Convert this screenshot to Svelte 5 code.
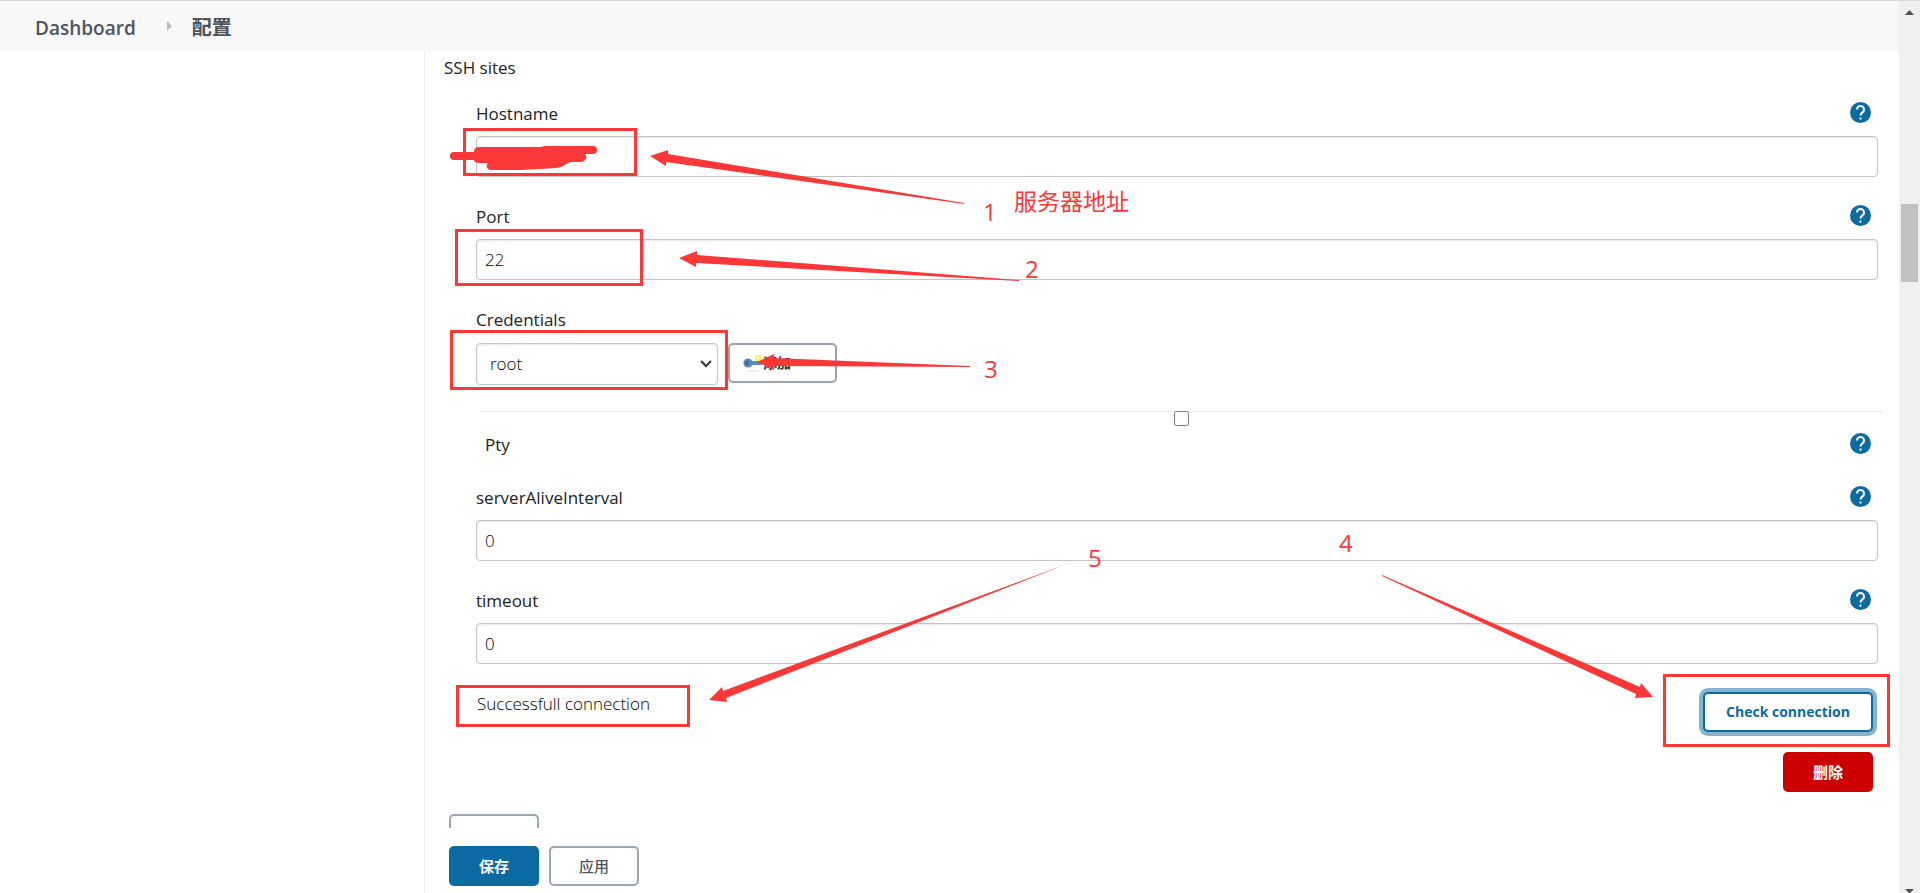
<script>
    let hostname = '';
    let port = '22';
    let credential = 'root';
    let pty = false;
    let interval = '0';
    let timeout = '0';

    const boxes = [
        { x: 463, y: 128, w: 174, h: 48 },
        { x: 455, y: 229, w: 188, h: 57 },
        { x: 450, y: 330, w: 278, h: 60 },
        { x: 456, y: 685, w: 234, h: 42 },
        { x: 1663, y: 674, w: 227, h: 73 }
    ];

    const arrows = [
        '650,156 668,150 668,154 964,203 964,204 666,162 666,166',
        '679,258 697,251 697,255 1019,280 1019,281 696,263 696,267',
        '757,362 774,354 774,358 970,366 970,367 774,366 774,370',
        '709,700 722,687 723,691 1067,564 726,698 727,702',
        '1653,697 1641,683 1640,687 1382,575 1382,576 1636,694 1635,698'
    ];

    const notes = [
        { x: 983, y: 221, text: '1' },
        { x: 1025, y: 278, text: '2' },
        { x: 984, y: 378, text: '3' },
        { x: 1339, y: 552, text: '4' },
        { x: 1088, y: 567, text: '5' }
    ];
</script>

<style>
    :global(body) {
        background: #fff;
    }

    .page {
        position: relative;
        box-sizing: border-box;
        display: flex;
        height: 100vh;
        overflow: hidden;
        border-top: 1px solid #dadadf;
        color: #222;
        font-family: "Open Sans", "Noto Sans", "Noto Sans CJK SC", sans-serif;
        font-size: 17px;
        line-height: 24px;
    }

    .window {
        flex: 1;
        min-width: 0;
        display: flex;
        flex-direction: column;
    }

    .breadcrumbs {
        box-sizing: border-box;
        display: flex;
        align-items: center;
        flex: none;
        height: 50px;
        padding: 3px 0 0 35px;
        background: #f8f8f8;
        font-size: 19px;
        font-weight: 600;
    }

    .breadcrumbs a {
        color: #4d545d;
        text-decoration: none;
    }

    .breadcrumbs a:last-child {
        font-size: 20px;
    }

    .breadcrumbs svg {
        width: 6px;
        height: 10px;
        margin: 0 19px 4px 31px;
    }

    .body {
        flex: 1;
        min-height: 0;
        display: flex;
    }

    .side {
        flex: none;
        width: 424px;
        border-right: 1px solid #eaeff2;
    }

    main {
        flex: 1;
        min-width: 0;
        display: flex;
        flex-direction: column;
    }

    form {
        flex: 1;
        min-height: 0;
        overflow: hidden;
        padding: 5px 21px 0 19px;
    }

    h2 {
        margin: 0 0 22px;
        font-size: 17px;
        font-weight: 400;
    }

    .site {
        padding-left: 32px;
    }

    .field {
        margin-bottom: 28px;
    }

    .field.credentials {
        margin-bottom: 26px;
    }

    .head {
        display: flex;
        align-items: flex-start;
        justify-content: space-between;
        height: 24px;
        margin-bottom: 10px;
        padding-right: 7px;
        font-weight: 500;
    }

    .help {
        width: 21px;
        height: 21px;
        padding: 0;
        border: 0;
        border-radius: 50%;
        background: none;
    }

    .help svg {
        display: block;
    }

    input[type="text"], select {
        display: block;
        box-sizing: border-box;
        width: 100%;
        height: 41px;
        padding: 0 8px;
        border: 1px solid #c3c3c3;
        border-radius: 4px;
        background: #fff;
        box-shadow: inset 0 1px 2px rgba(0, 0, 0, .1);
        color: #000;
        font: inherit;
        font-weight: 300;
    }

    .row {
        display: flex;
        align-items: flex-start;
        gap: 10px;
        padding-top: 1px;
    }

    .pick {
        display: grid;
        width: 242px;
        align-items: center;
    }

    .pick > * {
        grid-area: 1 / 1;
    }

    .pick select {
        height: 42px;
        padding: 0 13px;
        appearance: none;
    }

    .pick svg {
        justify-self: end;
        margin-right: 6px;
        pointer-events: none;
    }

    button.btn {
        box-sizing: border-box;
        min-width: 90px;
        height: 40px;
        padding: 0 20px;
        border: 2px solid #9aa5af;
        border-radius: 5px;
        background: #fff;
        color: #4d545d;
        font: inherit;
        font-size: 15px;
        font-weight: 700;
    }

    button.add {
        display: flex;
        align-items: center;
        width: 109px;
        padding: 0 13px;
        color: #333;
        font-size: 14px;
    }

    button.check {
        width: 170px;
        padding: 0;
        border-color: #0b6aa2;
        color: #0b6aa2;
        box-shadow: 0 0 0 4px rgba(11, 106, 162, .5);
        font-size: 14px;
    }

    button.delete {
        border-color: #cc0003;
        background: #cc0003;
        color: #fff;
    }

    button.save {
        border-color: #0b6aa2;
        background: #0b6aa2;
        color: #fff;
    }

    button.apply {
        font-weight: 500;
    }

    .pty {
        display: flex;
        flex-direction: column;
        height: 74px;
        margin: 0 -5px 0 5px;
        border-top: 1px solid #eaeaea;
    }

    .pty input {
        align-self: center;
        width: 15px;
        height: 15px;
        margin: -1px 2px 7px 0;
    }

    .pty .head {
        margin: 0;
        padding: 0 12px 0 4px;
    }

    .status {
        display: flex;
        justify-content: space-between;
        padding-right: 5px;
    }

    .status p {
        margin: 0 0 0 1px;
        color: #000;
        font-weight: 300;
    }

    .actions {
        display: flex;
        flex-direction: column;
        align-items: flex-end;
        gap: 20px;
    }

    .more {
        margin: 22px 0 0 5px;
    }

    footer {
        display: flex;
        gap: 10px;
        flex: none;
        height: 47px;
        padding: 18px 0 0 24px;
    }

    .scrollbar {
        flex: none;
        display: flex;
        flex-direction: column;
        align-items: center;
        width: 21px;
        background: #f0f0f0;
    }

    .scrollbar svg {
        flex: none;
    }

    .scrollbar .thumb {
        width: 17px;
        height: 78px;
        margin: 189px 0 auto;
        background: #c1c1c1;
    }

    .marks {
        position: absolute;
        top: -1px;
        left: 0;
        pointer-events: none;
        fill: #fb3838;
        font-size: 24px;
    }
</style>

{#snippet help(name)}
    <button type="button" class="help" aria-label="Help for {name}">
        <svg width="21" height="21" viewBox="0 0 21 21">
            <circle cx="10.5" cy="10.5" r="10.5" fill="#0b6aa2" />
            <path d="M7 7.400a3.500 3.500 0 1 1 5.500 2.900c-1.300 1-2 1.500-2 3.200" fill="none" stroke="#fff" stroke-width="2" />
            <path d="M9.500 15.600h2v2h-2z" fill="#fff" />
        </svg>
    </button>
{/snippet}

<div class="page">
    <div class="window">
        <nav class="breadcrumbs">
            <a href="#dashboard">Dashboard</a>
            <svg viewBox="0 0 6 10"><path d="M0 0l5 5-5 5z" fill="#b9bcc0" /></svg>
            <a href="#configure">配置</a>
        </nav>

        <div class="body">
            <div class="side"></div>
            <main>
                <form on:submit|preventDefault>
                    <h2>SSH sites</h2>
                    <div class="site">
                        <div class="field">
                            <div class="head"><label for="hostname">Hostname</label>{@render help('Hostname')}</div>
                            <input id="hostname" type="text" bind:value={hostname}>
                        </div>
                        <div class="field">
                            <div class="head"><label for="port">Port</label>{@render help('Port')}</div>
                            <input id="port" type="text" bind:value={port}>
                        </div>
                        <div class="field credentials">
                            <div class="head"><label for="credential">Credentials</label></div>
                            <div class="row">
                                <div class="pick">
                                    <select id="credential" bind:value={credential}>
                                        <option>root</option>
                                    </select>
                                    <svg width="12" height="8" viewBox="0 0 12 8"><path d="M1 1l5 5 5-5" fill="none" stroke="#333" stroke-width="2" /></svg>
                                </div>
                                <button type="button" class="btn add">
                                    <svg width="20" height="20" viewBox="0 0 20 20">
                                        <ellipse cx="10" cy="18" rx="8" ry="1.2" fill="#eee" />
                                        <path d="M7 8h12v4H7z" fill="#5c8fcb" />
                                        <circle cx="5" cy="10" r="4.6" fill="#5688c4" />
                                        <circle cx="4" cy="10" r="2" fill="#47668c" />
                                        <circle cx="15" cy="5" r="2.4" fill="#fffbc0" stroke="#fdf05a" stroke-width="1.8" />
                                    </svg>
                                    添加
                                </button>
                            </div>
                        </div>

                        <div class="pty">
                            <input id="pty" type="checkbox" bind:checked={pty}>
                            <div class="head"><label for="pty">Pty</label>{@render help('Pty')}</div>
                        </div>

                        <div class="field">
                            <div class="head"><label for="interval">serverAliveInterval</label>{@render help('serverAliveInterval')}</div>
                            <input id="interval" type="text" bind:value={interval}>
                        </div>
                        <div class="field">
                            <div class="head"><label for="timeout">timeout</label>{@render help('timeout')}</div>
                            <input id="timeout" type="text" bind:value={timeout}>
                        </div>

                        <div class="status">
                            <p>Successfull connection</p>
                            <div class="actions">
                                <button type="button" class="btn check">Check connection</button>
                                <button type="button" class="btn delete">删除</button>
                            </div>
                        </div>
                    </div>
                    <button type="button" class="btn more" aria-label="Add site"></button>
                </form>

                <footer>
                    <button type="button" class="btn save">保存</button>
                    <button type="button" class="btn apply">应用</button>
                </footer>
            </main>
        </div>
    </div>

    <div class="scrollbar">
        <svg width="9" height="14" viewBox="0 0 9 14"><path d="M0 14l4.500-5 4.500 5z" fill="#505050" /></svg>
        <div class="thumb"></div>
        <svg width="9" height="4" viewBox="0 0 9 4"><path d="M0 0h9l-4 4h-1z" fill="#505050" /></svg>
    </div>

    <!-- red pen notes over the form -->
    <svg class="marks" width="1920" height="893" viewBox="0 0 1920 893">
        {#each boxes as box}
            <rect x={box.x + 1.5} y={box.y + 1.5} width={box.w - 3} height={box.h - 3} fill="none" stroke="#fb3838" stroke-width="3" />
        {/each}
        {#each arrows as points}
            <polygon {points} />
        {/each}
        <path d="M454 152H474Q474 147 479 147H540L545 146H593A4 4 0 0 1 593 154H585Q587 156 586 159Q584 162 580 162H570L563 166Q560 168 555 168L540 169L520 170H491A4 4 0 0 1 488 163H478Q474 162 474 160H454A4 4 0 0 1 454 152Z" />
        {#each notes as note}
            <text x={note.x} y={note.y}>{note.text}</text>
        {/each}
        <text x="1014" y="210" font-size="23">服务器地址</text>
    </svg>
</div>
